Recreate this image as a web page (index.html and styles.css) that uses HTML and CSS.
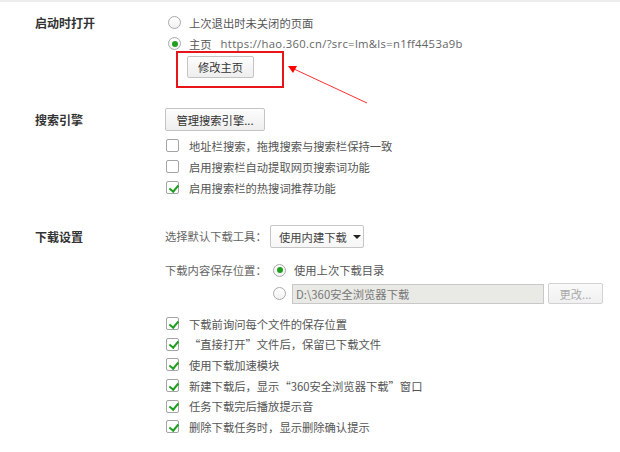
FILE: index.html
```html
<!DOCTYPE html>
<html lang="zh-CN">
<head>
<meta charset="UTF-8" />
<title>设置</title>
<link rel="stylesheet" href="styles.css">
</head>
<body>

<div class="settings">

  <!-- 启动时打开 -->
  <section class="group group-startup">
    <h3 class="group-title">启动时打开</h3>
    <div class="group-body">
      <div class="opt"><span class="radio"></span>上次退出时未关闭的页面</div>
      <div class="opt"><span class="radio checked"></span>主页<span class="url">https://hao.360.cn/?src=lm&amp;ls=n1ff4453a9b</span></div>
      <div class="btn-line">
        <button class="btn btn-home">修改主页</button>
        <span class="mark-box"></span>
        <svg class="mark-arrow" width="84" height="40" viewBox="0 0 84 40">
          <line x1="80" y1="38" x2="7" y2="4" stroke="#ff3030" stroke-width="1" />
          <polygon points="1,1 10,1 6,8" fill="#ff0000" />
        </svg>
      </div>
    </div>
  </section>

  <!-- 搜索引擎 -->
  <section class="group group-search">
    <h3 class="group-title">搜索引擎</h3>
    <div class="group-body">
      <button class="btn btn-engines">管理搜索引擎...</button>
      <div class="checks">
        <div class="opt"><span class="check"></span>地址栏搜索，拖拽搜索与搜索栏保持一致</div>
        <div class="opt"><span class="check"></span>启用搜索栏自动提取网页搜索词功能</div>
        <div class="opt"><span class="check on"></span>启用搜索栏的热搜词推荐功能</div>
      </div>
    </div>
  </section>

  <!-- 下载设置 -->
  <section class="group group-download">
    <h3 class="group-title">下载设置</h3>
    <div class="group-body">
      <div class="fields">
        <span class="field-label">选择默认下载工具：</span>
        <div class="select">使用内建下载<span class="caret"></span></div>

        <span class="field-label field-label-path">下载内容保存位置：</span>
        <div class="path-options">
          <div class="opt"><span class="radio checked"></span>使用上次下载目录</div>
          <div class="opt path-row">
            <span class="radio"></span>
            <input class="path-input" type="text" value="D:\360安全浏览器下载" disabled>
            <button class="btn btn-change" disabled>更改...</button>
          </div>
        </div>
      </div>

      <div class="checks checks-download">
        <div class="opt"><span class="check on"></span>下载前询问每个文件的保存位置</div>
        <div class="opt"><span class="check on"></span>“直接打开”文件后，保留已下载文件</div>
        <div class="opt"><span class="check on"></span>使用下载加速模块</div>
        <div class="opt"><span class="check on"></span>新建下载后，显示“360安全浏览器下载”窗口</div>
        <div class="opt"><span class="check on"></span>任务下载完后播放提示音</div>
        <div class="opt"><span class="check on"></span>删除下载任务时，显示删除确认提示</div>
      </div>
    </div>
  </section>

</div>

</body>
</html>
```

FILE: styles.css
```css
/* Base */
* {
  box-sizing: border-box;
}

html, body {
  margin: 0;
  padding: 0;
  background: #fff;
}

body {
  border-top: 2px solid #ececec;
  font-family: "Noto Sans CJK SC", sans-serif;
  font-size: 11.3px;
  color: #555;
}

.settings {
  padding: 10px 0 0 35px;
}

/* Section = title column + body column */
.group {
  display: grid;
  grid-template-columns: 130px 1fr;
}

.group-search { margin-top: 30px; }
.group-download { margin-top: 27px; }

.group-title {
  margin: 0;
  font-size: 12px;
  font-weight: 700;
  line-height: 21px;
  color: #333;
}

.group-search .group-title,
.group-download .group-title {
  padding-top: 1px;
}

.group-body {
  display: flex;
  flex-direction: column;
  align-items: flex-start;
}

/* Option rows */
.opt {
  display: flex;
  align-items: center;
  height: 21px;
  white-space: nowrap;
}

.url {
  margin-left: 9px;
  font-family: "Open Sans", sans-serif;
  font-size: 11.3px;
  letter-spacing: 0.3px;
  color: #666;
}

/* Radio */
.radio {
  width: 13px;
  height: 13px;
  margin: 0 8px 0 3px;
  border: 1px solid #a9a9a9;
  border-radius: 50%;
  background: linear-gradient(#fff, #f1f1f1);
  display: inline-flex;
  align-items: center;
  justify-content: center;
  flex: none;
}

.radio.checked::after {
  content: "";
  width: 6px;
  height: 6px;
  border-radius: 50%;
  background: #1f9e1f;
}

/* Checkbox */
.check {
  width: 13px;
  height: 13px;
  margin: 0 10px 0 1px;
  border: 1px solid #a4a4a4;
  border-radius: 2px;
  background: #fff;
  flex: none;
  position: relative;
}

.check.on::after {
  content: "";
  position: absolute;
  left: 3.5px;
  top: 0.5px;
  width: 3.5px;
  height: 7px;
  border: solid #1e9e1e;
  border-width: 0 2px 2px 0;
  transform: rotate(40deg);
}

/* Buttons */
.btn {
  font-family: inherit;
  font-size: 11.3px;
  color: #333;
  padding: 0;
  border: 1px solid #c4c4c4;
  border-radius: 2px;
  background: linear-gradient(#fdfdfd, #eeeeee);
  cursor: pointer;
}

.btn-line {
  position: relative;
  margin: 2px 0 0 22px;
}

.btn-home {
  width: 67px;
  height: 22px;
  display: block;
}

.btn-engines {
  width: 100px;
  height: 23px;
}

.btn-change {
  width: 55px;
  height: 21px;
  margin-left: 4px;
  color: #aaa;
  background: linear-gradient(#fafafa, #f0f0f0);
  border-color: #d2d2d2;
  cursor: default;
}

/* Annotation overlay */
.mark-box {
  position: absolute;
  left: -11px;
  top: -5px;
  width: 108px;
  height: 37px;
  border: 2px solid #e8141a;
}

.mark-arrow {
  position: absolute;
  left: 100px;
  top: 9px;
}

.checks {
  margin-top: 4px;
}

/* Download fields */
.fields {
  display: grid;
  grid-template-columns: 105px auto;
  align-items: start;
}

.field-label {
  color: #666;
  line-height: 23px;
  white-space: nowrap;
}

.field-label-path {
  margin-top: 11.5px;
  line-height: 21px;
}

.select {
  width: 94px;
  height: 23px;
  padding-left: 8px;
  display: flex;
  align-items: center;
  color: #444;
  border: 1px solid #c6c6c6;
  border-radius: 2px;
  background: linear-gradient(#fff, #f6f6f6);
}

.caret {
  margin-left: 6px;
  border-left: 4px solid transparent;
  border-right: 4px solid transparent;
  border-top: 4px solid #222;
}

.path-options {
  margin-top: 11.5px;
}

.path-row {
  margin-top: 2.5px;
}

.path-input {
  width: 252px;
  height: 20px;
  margin-left: -2px;
  padding: 0 3px;
  font-family: inherit;
  font-size: 11.3px;
  color: #777;
  border: 1px solid #c8c8c8;
  background: #e9e9e6;
}

.checks-download {
  margin-top: 9.5px;
}

.checks-download .opt {
  height: 20.6px;
}
```
